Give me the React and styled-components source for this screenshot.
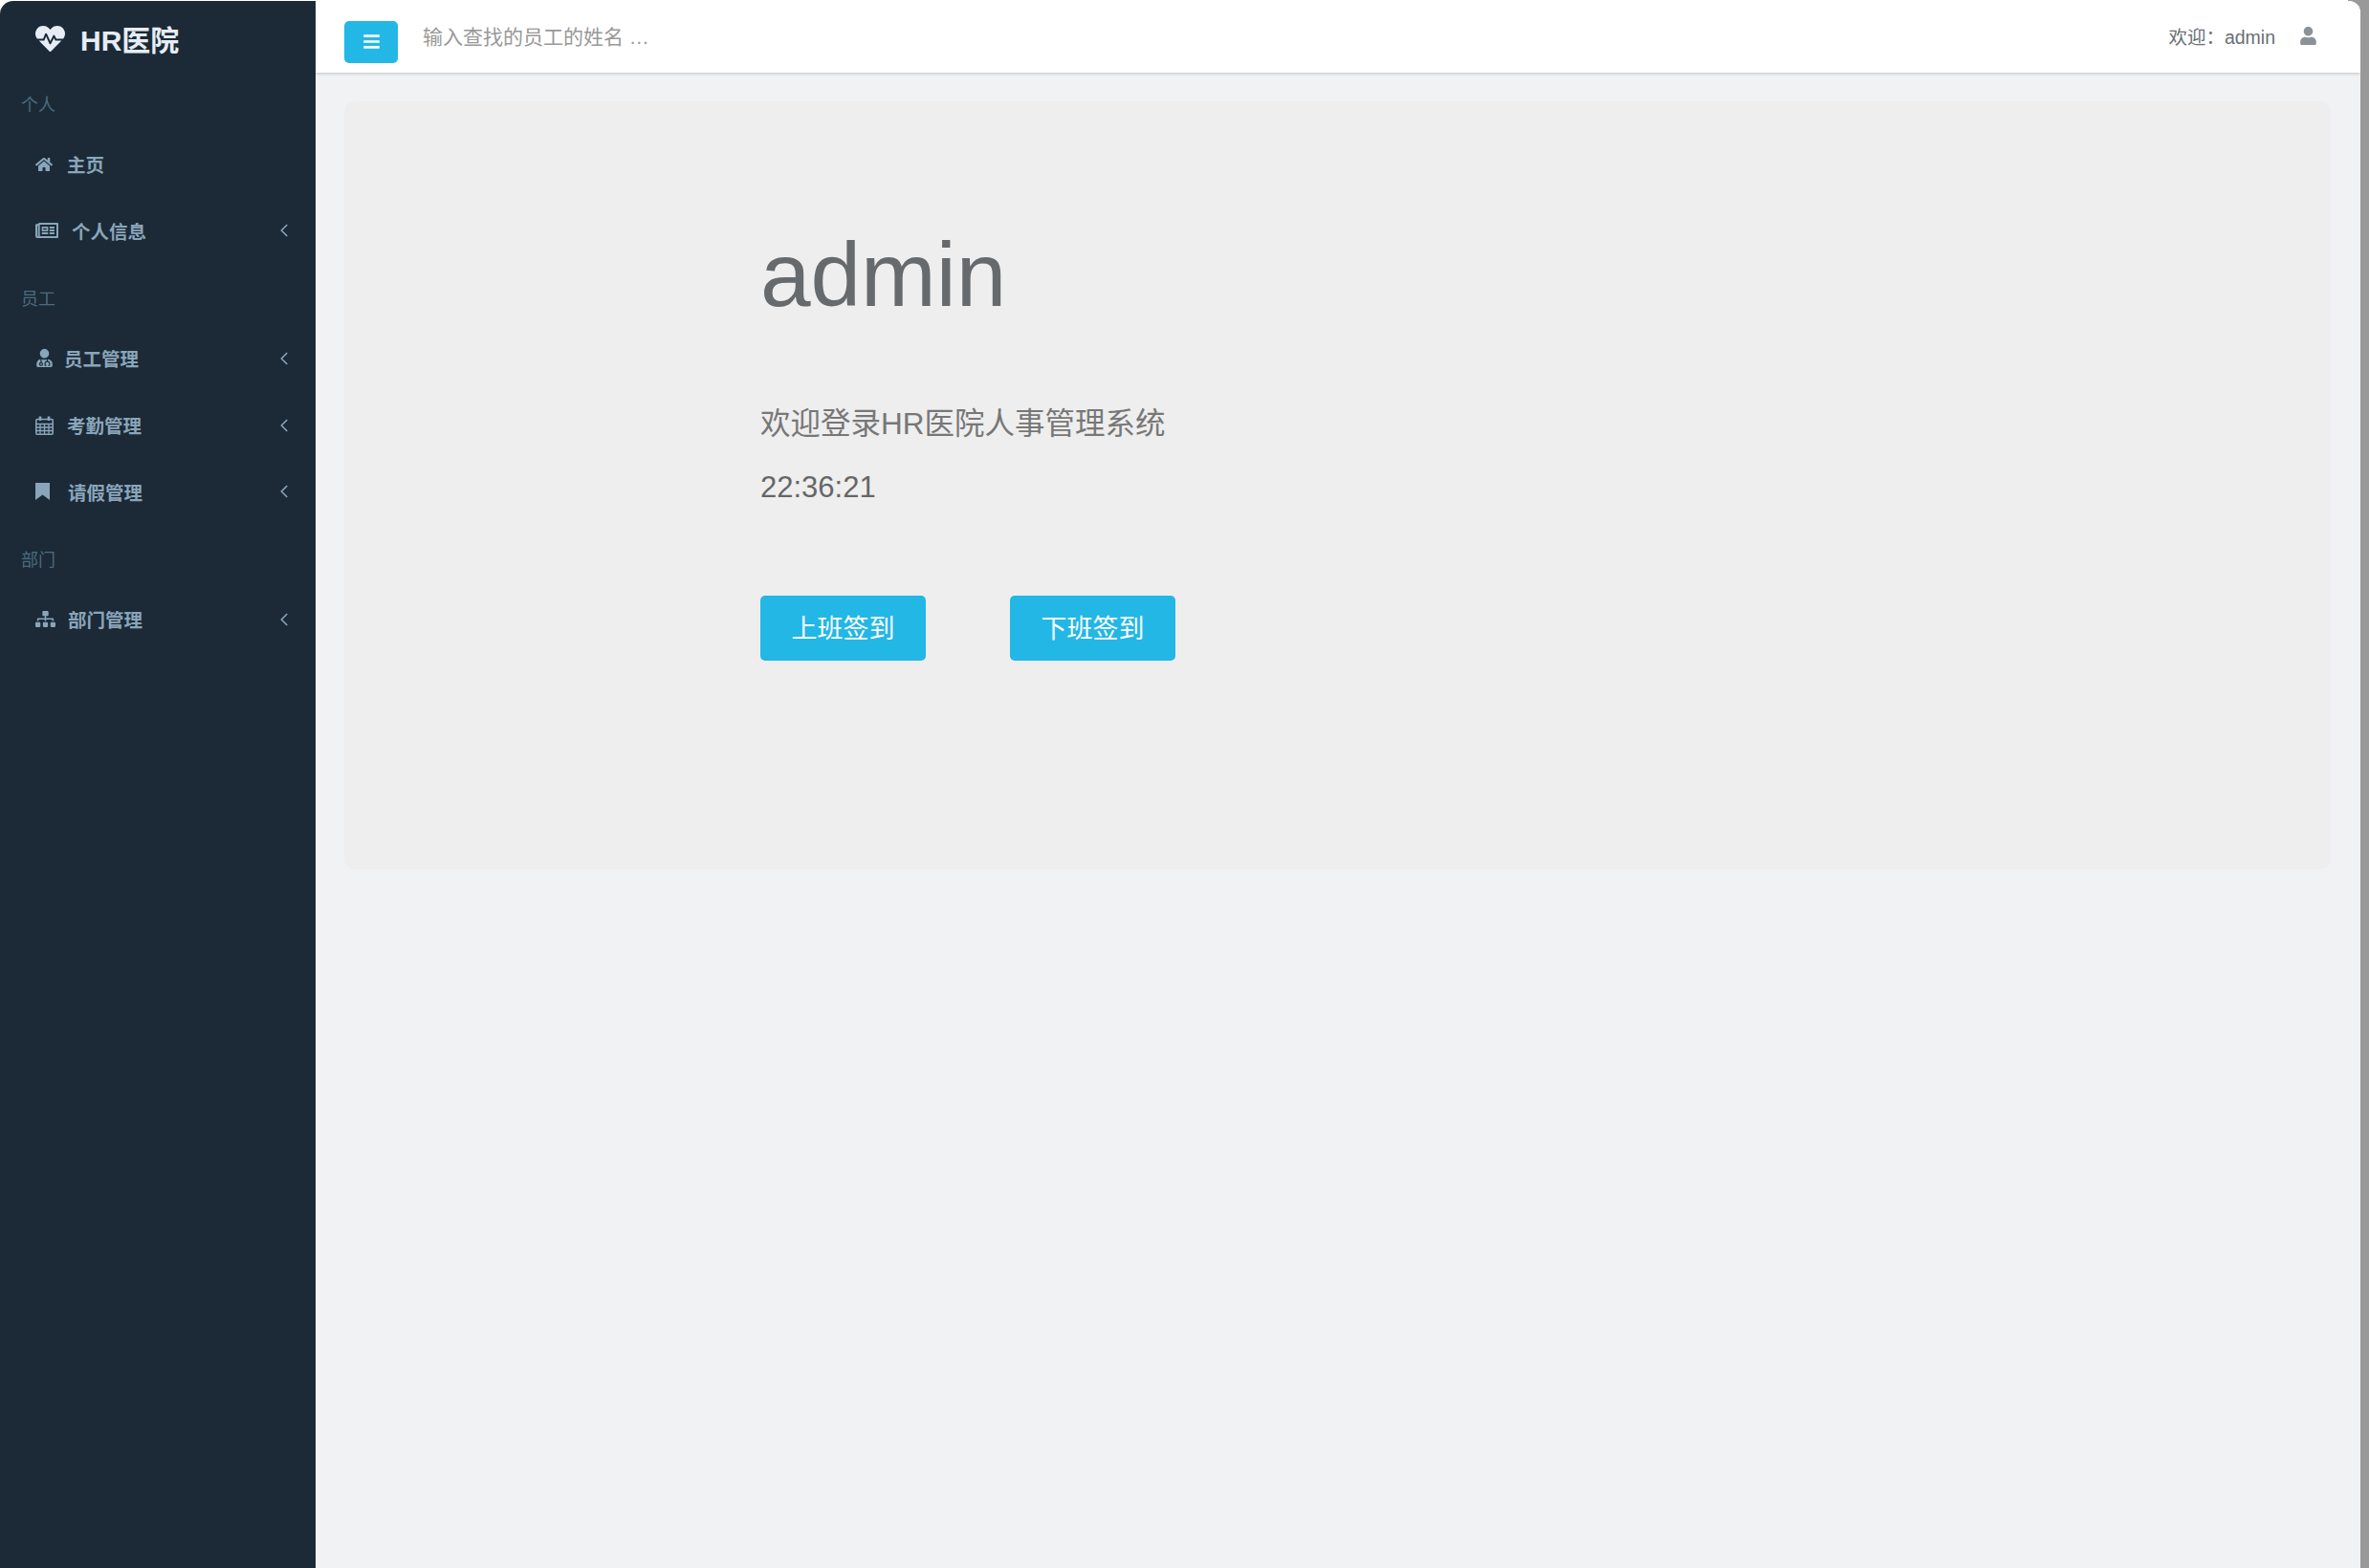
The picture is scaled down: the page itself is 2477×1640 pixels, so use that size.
import React from "react";
import styled, { createGlobalStyle } from "styled-components";
import { ChevronLeft } from "lucide-react";
import {
  FaBars,
  FaHeartbeat,
  FaHome,
  FaRegNewspaper,
  FaSitemap,
  FaUser,
  FaUserMd,
} from "react-icons/fa";

const FONT = `"Liberation Sans", "Noto Sans CJK SC", sans-serif`;

const GlobalStyle = createGlobalStyle`
  html, body {
    margin: 0;
    padding: 0;
    background: #fff;
  }
  body {
    font-family: ${FONT};
    overflow: hidden;
  }
`;

function CalendarIcon() {
  return (
    <svg width="19" height="20" viewBox="0 0 19 20" fill="none" stroke="currentColor">
      <rect x="0.75" y="3.5" width="17.5" height="15.75" rx="1.2" strokeWidth="1.5" />
      <path d="M1 8.5H18M1 12H18M1 15.5H18M5 8V19M9.5 8V19M14 8V19" strokeWidth="1.3" />
      <path d="M5 0.5V5M14 0.5V5" strokeWidth="2.6" />
    </svg>
  );
}

function BookmarkIcon() {
  return (
    <svg width="15" height="18" viewBox="0 0 15 18" fill="currentColor">
      <path d="M0 0H15V18L7.5 12.5L0 18Z" />
    </svg>
  );
}

const navGroups = [
  {
    label: "个人",
    items: [
      { text: "主页", icon: <FaHome size={18} />, gap: 15 },
      { text: "个人信息", icon: <FaRegNewspaper size={24} />, gap: 14, arrow: true },
    ],
  },
  {
    label: "员工",
    items: [
      { text: "员工管理", icon: <FaUserMd size={19} />, gap: 11, arrow: true },
      { text: "考勤管理", icon: <CalendarIcon />, gap: 14, arrow: true },
      { text: "请假管理", icon: <BookmarkIcon />, gap: 19, arrow: true },
    ],
  },
  {
    label: "部门",
    items: [{ text: "部门管理", icon: <FaSitemap size={21} />, gap: 13, arrow: true }],
  },
];

export default function App() {
  return (
    <Page>
      <GlobalStyle />
      <Sidebar>
        <Logo>
          <FaHeartbeat size={31} />
          <span>HR医院</span>
        </Logo>
        {navGroups.map((group) => (
          <section key={group.label}>
            <GroupLabel>{group.label}</GroupLabel>
            {group.items.map((item) => (
              <NavRow key={item.text} $gap={item.gap}>
                {item.icon}
                <span>{item.text}</span>
                {item.arrow && (
                  <Arrow>
                    <ChevronLeft size={22} strokeWidth={1.8} />
                  </Arrow>
                )}
              </NavRow>
            ))}
          </section>
        ))}
      </Sidebar>
      <Main>
        <Header>
          <MenuButton>
            <FaBars size={19} />
          </MenuButton>
          <SearchInput placeholder="输入查找的员工的姓名 …" />
          <Welcome>欢迎：admin</Welcome>
          <UserIcon>
            <FaUser size={19} />
          </UserIcon>
        </Header>
        <Content>
          <Jumbotron>
            <Title>admin</Title>
            <Lead>欢迎登录HR医院人事管理系统</Lead>
            <Clock>22:36:21</Clock>
            <Actions>
              <SignButton>上班签到</SignButton>
              <SignButton>下班签到</SignButton>
            </Actions>
          </Jumbotron>
        </Content>
      </Main>
      <WindowEdge />
    </Page>
  );
}

const Page = styled.div`
  display: flex;
  width: 2477px;
  height: 1640px;
  overflow: hidden;
  background: linear-gradient(to right, #fff calc(100% - 22px), #999 calc(100% - 22px));
`;

const Sidebar = styled.aside`
  flex: 0 0 330px;
  box-sizing: border-box;
  margin-top: 1px;
  background: #1b2a36;
  border-top-left-radius: 14px;
`;

const Logo = styled.div`
  display: flex;
  align-items: center;
  gap: 16px;
  height: 72px;
  padding: 6px 0 0 37px;
  box-sizing: border-box;
  color: #e6edf5;
  font-size: 30px;
  font-weight: 700;
`;

const GroupLabel = styled.div`
  box-sizing: border-box;
  height: 64px;
  padding: 10px 0 0 22px;
  line-height: 54px;
  color: #4d6a80;
  font-size: 18px;
`;

const NavRow = styled.div`
  display: flex;
  align-items: center;
  gap: ${(p) => p.$gap}px;
  height: 69.6px;
  padding: 0 22px 0 37px;
  color: #8aa5ba;
  font-size: 19.5px;
  font-weight: 700;
`;

const Arrow = styled.span`
  display: flex;
  margin-left: auto;
  color: #8aa5ba;
`;

const Main = styled.main`
  flex: 1;
  display: flex;
  flex-direction: column;
  min-width: 0;
  margin-top: 1px;
  background: #f1f2f4;
  border-top-right-radius: 12px;
  overflow: hidden;
`;

const Header = styled.header`
  flex: 0 0 75px;
  display: flex;
  align-items: center;
  padding: 0 45px 0 30px;
  background: #fff;
  box-shadow: 0 1px 3px rgba(0, 0, 0, 0.2);
`;

const MenuButton = styled.button`
  display: flex;
  align-items: center;
  justify-content: center;
  width: 56px;
  height: 44px;
  margin-top: 10px;
  padding: 0;
  border: none;
  border-radius: 5px;
  background: #23b7e5;
  color: #fff;
`;

const SearchInput = styled.input`
  flex: 1;
  margin-left: 26px;
  padding: 0;
  border: none;
  outline: none;
  background: transparent;
  color: #555;
  font-family: ${FONT};
  font-size: 21px;
  &::placeholder {
    color: #999;
    opacity: 1;
  }
`;

const Welcome = styled.span`
  margin-bottom: 2px;
  color: #6a6f75;
  font-size: 19.5px;
`;

const UserIcon = styled.span`
  display: flex;
  margin: 0 0 2px 25px;
  color: #8b9197;
`;

const Content = styled.div`
  padding: 30px 31px 0 30px;
`;

const Jumbotron = styled.div`
  box-sizing: border-box;
  height: 803px;
  padding: 131px 0 0 435px;
  border-radius: 10px;
  background: #eee;
`;

const Title = styled.h1`
  margin: 0 0 81px;
  color: #666a6d;
  font-size: 94.5px;
  font-weight: 400;
  line-height: 100px;
`;

const Lead = styled.p`
  margin: 0 0 17px;
  color: #777;
  font-size: 31.5px;
  line-height: 50px;
`;

const Clock = styled.div`
  color: #666;
  font-size: 31px;
  line-height: 50px;
`;

const Actions = styled.div`
  display: flex;
  gap: 88px;
  margin-top: 88px;
`;

const SignButton = styled.button`
  width: 173px;
  height: 68px;
  padding: 0 0 4px;
  border: none;
  border-radius: 5px;
  background: #23b7e5;
  color: #fff;
  font-family: ${FONT};
  font-size: 27px;
`;

const WindowEdge = styled.div`
  flex: 0 0 9px;
`;
